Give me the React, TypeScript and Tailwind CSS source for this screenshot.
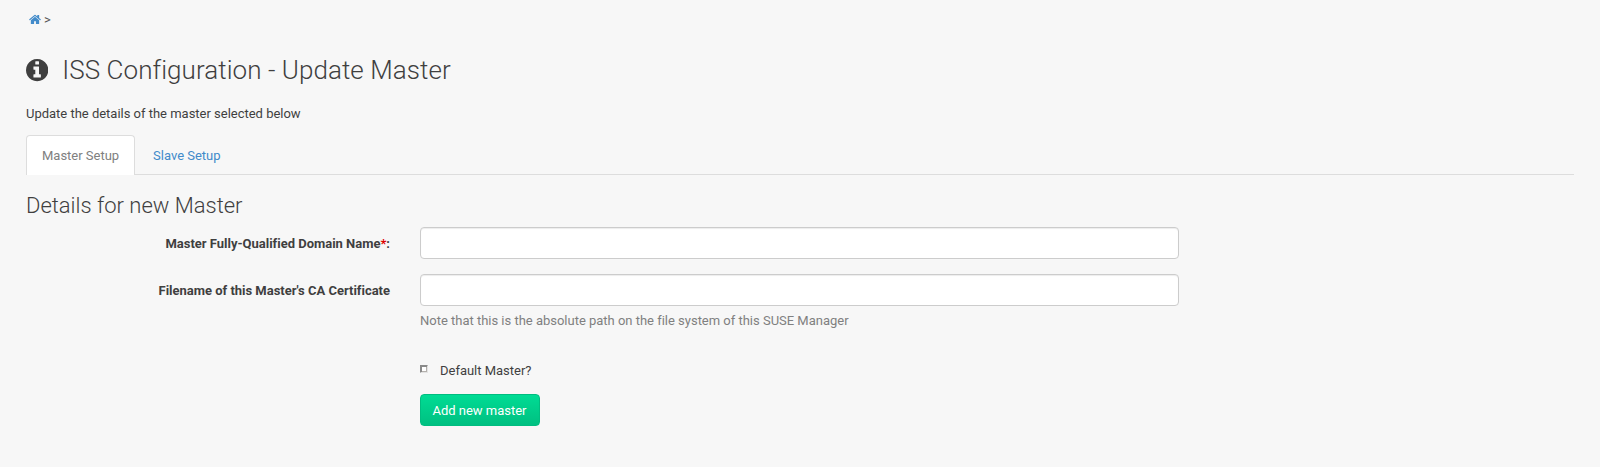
import React from "react";

function HomeIcon() {
  return (
    <svg viewBox="64 0 1664 1792" className="h-[13px] w-[12px] fill-[#428bca]" aria-hidden="true">
      <path d="M1472 992v480q0 26-19 45t-45 19h-384v-384h-256v384h-384q-26 0-45-19t-19-45v-480q0-1 .5-3t.5-3l575-474 575 474q1 2 1 6zm223-69l-62 74q-8 9-21 11h-3q-13 0-21-7l-692-577-692 577q-12 8-24 7-13-2-21-11l-62-74q-8-10-7-23.5t11-21.5l719-599q32-26 76-26t76 26l244 204v-195q0-14 9-23t23-9h192q14 0 23 9t9 23v408l219 182q10 8 11 21.5t-7 23.5z" />
    </svg>
  );
}

function InfoIcon() {
  return (
    <svg viewBox="128 128 1536 1536" className="h-[22.3px] w-[22.3px] fill-[#3f3f3f]" aria-hidden="true">
      <path d="M1152 1376v-160q0-14-9-23t-23-9h-96v-512q0-14-9-23t-23-9h-320q-14 0-23 9t-9 23v160q0 14 9 23t23 9h96v320h-96q-14 0-23 9t-9 23v160q0 14 9 23t23 9h448q14 0 23-9t9-23zm-128-896v-160q0-14-9-23t-23-9h-192q-14 0-23 9t-9 23v160q0 14 9 23t23 9h192q14 0 23-9t9-23zm640 416q0 209-103 385.5t-279.5 279.5-385.5 103-385.5-103-279.5-279.5-103-385.5 103-385.5 279.5-279.5 385.5-103 385.5 103 279.5 279.5 103 385.5z" />
    </svg>
  );
}

const fieldClass =
  "block h-8 w-full rounded-[4px] border border-[#cccccc] bg-white px-3 text-[13px] shadow-[inset_0_1px_1px_rgba(0,0,0,0.075)] outline-none";

export default function App() {
  return (
    <div className="h-[467px] bg-[#f7f7f7] px-[26px] pt-[10px] font-['Roboto',sans-serif] text-[13px] leading-[19px] tracking-[-0.012px] text-[#3f3f3f]">
      <nav className="flex h-[19px] items-center gap-[3px] pl-[3px]">
        <a href="#" aria-label="Home">
          <HomeIcon />
        </a>
        <span className="text-[#555555]">&gt;</span>
      </nav>

      <h1 className="mt-[27px] flex h-[29px] items-center gap-[14px] text-[26px] leading-[29px] font-light tracking-[0.055px]">
        <InfoIcon />
        <span>ISS Configuration - Update Master</span>
      </h1>

      <p className="mt-[19px]">Update the details of the master selected below</p>

      <div className="mt-[12px] flex h-10 border-b border-[#dddddd]">
        <a href="#" className="h-10 rounded-t-[4px] border border-b-0 border-[#dddddd] bg-white px-[15px] pt-[10px] text-[#808080]">
          Master Setup
        </a>
        <a href="#" className="ml-[2px] h-10 px-4 pt-[11px] text-[#428bca]">
          Slave Setup
        </a>
      </div>

      <h2 className="mt-[18px] h-[25px] text-[22px] leading-[25px] font-light">Details for new Master</h2>

      <form className="mt-[9px]" onSubmit={(e) => e.preventDefault()}>
        <div className="flex h-8">
          <label htmlFor="fqdn" className="w-[364px] pt-[7px] text-right font-bold">
            Master Fully-Qualified Domain Name<span className="text-[#dd0000]">*</span>:
          </label>
          <div className="ml-[30px] w-[759px]">
            <input id="fqdn" type="text" className={fieldClass} />
          </div>
        </div>

        <div className="mt-[15px] flex">
          <label htmlFor="cert" className="w-[364px] pt-[7px] text-right font-bold">
            Filename of this Master's CA Certificate
          </label>
          <div className="ml-[30px] w-[759px]">
            <input id="cert" type="text" className={fieldClass} />
            <p className="mt-[5px] text-[#808080]">Note that this is the absolute path on the file system of this SUSE Manager</p>
          </div>
        </div>

        <div className="mt-[31px] ml-[394px]">
          <label className="flex h-[19px] w-fit items-start">
            <input
              type="checkbox"
              className="mt-[4px] h-2 w-2 appearance-none border border-t-[#8a8a8a] border-r-[#e4e4e4] border-b-[#e4e4e4] border-l-[#8a8a8a] bg-white shadow-[inset_1px_1px_0_#8a8a8a,inset_-1px_-1px_0_#b4b0ac]"
            />
            <span className="ml-3">Default Master?</span>
          </label>
          <button
            type="submit"
            className="mt-[14px] block h-8 w-[120px] rounded-[4px] border border-[#00bd80] bg-linear-to-b from-[#00dc94] to-[#00c081] pr-[1px] text-[13px] leading-[19px] tracking-[-0.012px] text-white"
          >
            Add new master
          </button>
        </div>
      </form>
    </div>
  );
}
